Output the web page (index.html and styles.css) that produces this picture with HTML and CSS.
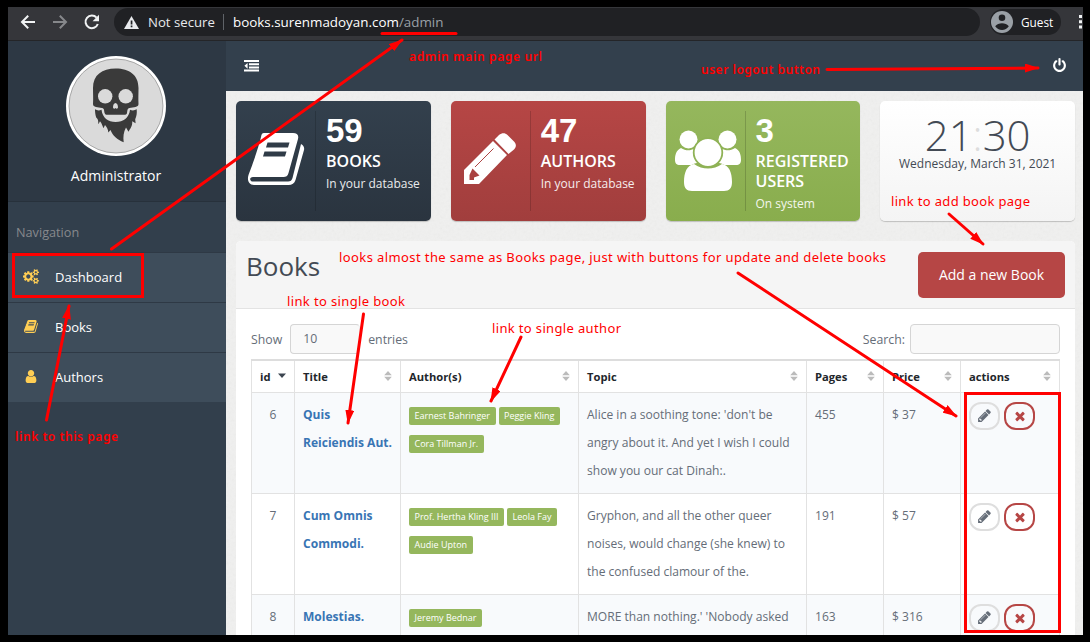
FILE: index.html
```
<!DOCTYPE html>
<html lang="en">
<head>
<meta charset="utf-8">
<title>Books admin</title>
<link rel="stylesheet" href="styles.css">
</head>
<body>
<svg class="defs" width="0" height="0" aria-hidden="true">
  <symbol id="pencil" viewBox="0 0 1792 1792"><path d="M491 1536l91-91-235-235-91 91v107h128v128h107zm523-928q0-22-22-22-10 0-17 7l-542 542q-7 7-7 17 0 22 22 22 10 0 17-7l542-542q7-7 7-17zm-54-192l416 416-832 832h-416v-416zm683 96q0 53-37 90l-166 166-416-416 166-165q36-38 90-38 53 0 91 38l235 234q37 39 37 91z"/></symbol>
  <symbol id="times" viewBox="0 0 1792 1792"><path d="M1490 1322q0 40-28 68l-136 136q-28 28-68 28t-68-28l-294-294-294 294q-28 28-68 28t-68-28l-136-136q-28-28-28-68t28-68l294-294-294-294q-28-28-28-68t28-68l136-136q28-28 68-28t68 28l294 294 294-294q28-28 68-28t68 28l136 136q28 28 28 68t-28 68l-294 294 294 294q28 28 28 68z"/></symbol>
  <symbol id="sort" viewBox="0 0 8 10"><path d="M4 0L7.800 4.300H.2zM4 10L7.800 5.700H.2z"/></symbol>
</svg>
<div class="window">
  <header class="chrome">
    <div class="nav-buttons">
      <svg width="16" height="16" viewBox="0 0 16 16" fill="none" stroke="#f1f3f4" stroke-width="2"><path d="M15 8H2.500M8.200 1.800L2 8l6.200 6.200"/></svg>
      <svg width="16" height="16" viewBox="0 0 16 16" fill="none" stroke="#86888b" stroke-width="2"><path d="M1 8h12.500M7.800 1.800L14 8l-6.200 6.200"/></svg>
      <svg width="16" height="16" viewBox="0 0 16 16" fill="none" stroke="#f1f3f4" stroke-width="2"><path d="M13.800 10A6.300 6.300 0 1 1 12.600 3.700"/><path d="M15 .8v6.400H8.600z" fill="#f1f3f4" stroke="none"/></svg>
    </div>
    <div class="omnibox">
      <svg width="15" height="13" viewBox="0 0 15 13"><path d="M7.500 0L15 13H0z" fill="#e8eaed"/><path d="M6.700 4.500h1.700v4H6.700zM6.700 9.600h1.700v1.700H6.700z" fill="#202124"/></svg>
      <span class="insecure">Not secure</span>
      <span class="url">books.surenmadoyan.com<span class="path">/admin</span></span>
    </div>
    <div class="guest">
      <svg width="22" height="22" viewBox="0 0 22 22"><circle cx="11" cy="11" r="11" fill="#9aa0a6"/><circle cx="11" cy="6.800" r="3.300" fill="#202124"/><path d="M4.200 15.300C5.500 13 8.500 12.200 11 12.200s5.500.8 6.800 3.100C16.300 17.600 13.800 19 11 19s-5.300-1.400-6.800-3.700z" fill="#202124"/></svg>
      <span>Guest</span>
    </div>
    <svg class="dots" width="3" height="14" viewBox="0 0 3 14" fill="#f1f3f4"><path d="M0 0h3v3H0zM0 5.300h3v3H0zM0 10.600h3v3H0z"/></svg>
  </header>
  <div class="app">
    <aside class="sidebar">
      <div class="profile">
        <svg class="avatar" width="100" height="100" viewBox="0 0 100 100">
          <circle cx="50" cy="50" r="50" fill="#fff"/><circle cx="50" cy="50" r="47" fill="#dadada" stroke="#8d8d8d" stroke-width=".7"/>
          <g fill="#3a3a3a">
            <path d="M27 32C27 19 36 12.500 49.700 12.500S72.500 19 72.500 32c0 6-.3 10 0 16 0 3.500-5 3.200-9 4-2.500.6-2 3-2.500 5-.3 1.500-1.500 1.700-3 1.700H41.500c-1.500 0-2.500-.2-2.900-1.700-.6-2 0-4.400-2.600-5-4-.8-9-.5-9-4 .4-6 0-10 0-16z"/>
            <path d="M29 53.300c2 1.400 4.500 1.300 6.500.5C36.500 62 42 66 49.700 66S63 62 64 53.800c2 .8 4.500.9 6.700-.5.4 4-.2 7-1.500 10l.4 4-3.400-2c.4 5-1.800 7-3.700 10.500L60 71.500c-2.500 4.500-3 9.500-2.300 14.700-6.500-2.700-11-6.500-13.200-12.200l-2.200 2.500c-.2-3.500-1.300-5-3.300-7.500l-1.500 3.200c-1.200-3-1.700-5-3.500-7l-1.600 3c-.2-3 .1-4.500-2.200-6.700-1-3-1.200-6-1.200-8.200z"/>
          </g>
          <circle cx="39.200" cy="40.300" r="7.200" fill="#dadada"/><circle cx="59.700" cy="40.300" r="7.200" fill="#dadada"/>
          <path d="M49.500 47c1.500 0 2.500 2.200 2.500 4.300 0 1.700-1.800 1.700-2.500.7-.7 1-2.500 1-2.500-.7 0-2.100 1-4.300 2.500-4.300z" fill="#dadada"/>
        </svg>
        <div class="name">Administrator</div>
      </div>
      <div class="nav-title">Navigation</div>
      <nav class="menu">
        <a class="item"><svg width="16" height="15" viewBox="0 0 1920 1792"><path d="M896 896q0-106-75-181t-181-75-181 75-75 181 75 181 181 75 181-75 75-181zm768 512q0-52-38-90t-90-38-90 38-38 90q0 53 37.500 90.500t90.500 37.500 90.500-37.500 37.500-90.500zm0-1024q0-52-38-90t-90-38-90 38-38 90q0 53 37.500 90.500t90.500 37.500 90.500-37.500 37.500-90.500zm-384 421v185q0 10-7 19.500t-16 10.500l-155 24q-11 35-32 76 34 48 90 115 7 11 7 20 0 12-7 19-23 30-82.500 89.500t-78.500 59.500q-11 0-21-7l-115-90q-37 19-77 31-11 108-23 155-7 24-30 24h-186q-11 0-20-7.500t-10-17.500l-23-153q-34-10-75-31l-118 89q-7 7-20 7-11 0-21-8-144-133-144-160 0-9 7-19 10-14 41-53t47-61q-23-44-35-82l-152-24q-10-1-17-9.500t-7-19.500v-185q0-10 7-19.500t16-10.500l155-24q11-35 32-76-34-48-90-115-7-11-7-20 0-12 7-20 22-30 82-89t79-59q11 0 21 7l115 90q34-18 77-32 11-108 23-154 7-24 30-24h186q11 0 20 7.500t10 17.500l23 153q34 10 75 31l118-89q8-7 20-7 11 0 21 8 144 133 144 160 0 8-7 19-12 16-42 54t-45 60q23 48 34 82l152 23q10 2 17 10.500t7 19.500zm640 533v140q0 16-149 31-12 27-30 52 51 113 51 138 0 4-4 7-122 71-124 71-8 0-46-47t-52-68q-20 2-30 2t-30-2q-14 21-52 68t-46 47q-2 0-124-71-4-3-4-7 0-25 51-138-18-25-30-52-149-15-149-31v-140q0-16 149-31 13-29 30-52-51-113-51-138 0-4 4-7 4-2 35-20t59-34 30-16q8 0 46 46.500t52 67.500q20-2 30-2t30 2q51-71 92-112l6-2q4 0 124 70 4 3 4 7 0 25-51 138 17 23 30 52 149 15 149 31zm0-1024v140q0 16-149 31-12 27-30 52 51 113 51 138 0 4-4 7-122 71-124 71-8 0-46-47t-52-68q-20 2-30 2t-30-2q-14 21-52 68t-46 47q-2 0-124-71-4-3-4-7 0-25 51-138-18-25-30-52-149-15-149-31v-140q0-16 149-31 13-29 30-52-51-113-51-138 0-4 4-7 4-2 35-20t59-34 30-16q8 0 46 46.500t52 67.500q20-2 30-2t30 2q51-71 92-112l6-2q4 0 124 70 4 3 4 7 0 25-51 138 17 23 30 52 149 15 149 31z"/></svg>Dashboard</a>
        <a class="item"><svg width="16" height="15" viewBox="0 0 1792 1792"><path d="M1703 478q40 57 18 129l-275 906q-19 64-76.500 107.500t-122.500 43.500h-923q-77 0-148.500-53.500t-99.500-131.500q-24-67-2-127 0-4 3-27t4-37q1-8-3-21.500t-3-19.500q2-11 8-21t16.500-23.500 16.500-23.500q23-38 45-91.500t30-91.500q3-10 .5-30t-.5-28q3-11 17-28t17-23q21-36 42-92t25-90q1-9-2.500-32t.5-28q4-13 22-30.500t22-22.500q19-26 42.500-84.500t27.500-96.500q1-8-3-25.500t-2-26.500q2-8 9-18t18-23 17-21q8-12 16.500-30.500t15-35 16-36 19.500-32 26.500-23.500 36-11.500 47.500 5.500l-1 3q38-9 51-9h761q74 0 114 56t18 130l-274 906q-36 119-71.500 153.500t-128.500 34.500h-869q-27 0-38 15-11 16-1 43 24 70 144 70h923q29 0 56-15.500t35-41.500l300-987q7-22 5-57 38 15 59 43zm-1064 2q-4 13 2 22.500t20 9.500h608q13 0 25.500-9.500t16.500-22.500l21-64q4-13-2-22.500t-20-9.500h-608q-13 0-25.500 9.500t-16.500 22.500zm-83 256q-4 13 2 22.500t20 9.500h608q13 0 25.500-9.500t16.500-22.500l21-64q4-13-2-22.500t-20-9.500h-608q-13 0-25.500 9.500t-16.500 22.500z"/></svg>Books</a>
        <a class="item"><svg width="16" height="15" viewBox="0 0 1792 1792"><path d="M1536 1399q0 109-62.500 187t-150.500 78h-854q-88 0-150.500-78t-62.500-187q0-85 8.500-160.500t31.500-152 58.500-131 94-89 134.500-34.500q131 128 313 128t313-128q76 0 134.500 34.500t94 89 58.500 131 31.500 152 8.500 160.500zm-256-887q0 159-112.500 271.500t-271.500 112.500-271.500-112.500-112.500-271.500 112.500-271.500 271.500-112.500 271.500 112.500 112.500 271.500z"/></svg>Authors</a>
      </nav>
    </aside>
    <main class="main">
      <div class="topbar">
        <svg width="15" height="12" viewBox="0 0 15 12" fill="#fff"><path d="M0 0h15v2H0zM5 3.200h10v2H5zM5 6.400h10v2H5zM0 9.600h15v2H0zM3.600 2.900v5.800L.4 5.800z"/></svg>
        <svg width="15" height="15" viewBox="0 0 1792 1792" fill="#fff"><path d="M1664 896q0 156-61 298t-164 245-245 164-298 61-298-61-245-164-164-245-61-298q0-182 80.500-343t226.500-270q43-32 95.500-25t83.500 50q32 42 24.500 94.500t-49.500 84.500q-98 74-151.500 181t-53.500 228q0 104 40.500 198.500t109.500 163.500 163.500 109.500 198.500 40.500 198.500-40.500 163.500-109.500 109.500-163.500 40.500-198.500q0-121-53.500-228t-151.500-181q-42-32-49.500-84.500t24.500-94.500q31-43 84-50t95 25q146 109 226.500 270t80.500 343zm-640-768v640q0 52-38 90t-90 38-90-38-38-90v-640q0-52 38-90t90-38 90 38 38 90z"/></svg>
      </div>
      <div class="content">
        <section class="tiles">
          <div class="tile navy">
            <div class="tile-icon"><svg width="58" height="54" viewBox="0 0 58 54"><path fill="#fff" fill-rule="evenodd" d="M17 1H46c4 0 6 2 5 6L41.500 41c-.8 3-2.500 4-5 4H6c-4 0-3.500 4.500 0 4.500H41c2.500 0 3.800-1 4.500-3.500L54 12c3 1.500 3.500 4 3 6L48.500 48c-1 3.500-3.500 5-7 5H7C1.500 53 0 48 1.500 43 5 34 12 14 14 5c.5-2.500 1-4 3-4zM20.500 10.500L19 15.500h22l1.500-5zM17.500 19.500L16 24.500h22l1.500-5z"/></svg></div>
            <div class="tile-text"><strong>59</strong><h3>BOOKS</h3><p>In your database</p></div>
          </div>
          <div class="tile red">
            <div class="tile-icon"><svg width="52" height="52" viewBox="0 0 52 52"><path fill="#fff" fill-rule="evenodd" d="M0 37L29 8 43 22 15 51H0zM30.500 6.500L35 2c3-2.500 6-2.500 8.500 0l6.500 6.500c2.500 3 2.500 5 0 8L44.500 21zM5.500 42v5h4.500v-2.500l5.500-2L8.500 35.500z"/><path d="M11 34L29.500 15.500" stroke="#ad4443" stroke-width="1"/></svg></div>
            <div class="tile-text"><strong>47</strong><h3>AUTHORS</h3><p>In your database</p></div>
          </div>
          <div class="tile green">
            <div class="tile-icon users"><svg width="66" height="61" viewBox="0 0 66 61" fill="#fff"><circle cx="13.500" cy="9.500" r="9"/><circle cx="52.500" cy="9.500" r="9"/><path d="M6 18c4.500 3 9.500 3 13.500.5-1 6 .5 10.500 4.500 14-3 .5-6 1.500-7.500 2.500H5c-3.500 0-5-2-5-5 0-5 1-9.500 6-12zM60 18c-4.500 3-9.500 3-13.500.5 1 6-.5 10.500-4.500 14 3 .5 6 1.500 7.500 2.500H61c3.500 0 5-2 5-5 0-5-1-9.500-6-12z"/><path d="M19 34c8.500 6 19.500 6 28 0 7 1 10 8.500 10 18 0 6-2.500 9-8 9H17c-5.500 0-8-3-8-9 0-9.500 3-17 10-18z"/><circle cx="33" cy="22.500" r="14.300" stroke="#8fb256" stroke-width="1.800"/></svg></div>
            <div class="tile-text"><strong>3</strong><h3>REGISTERED USERS</h3><p>On system</p></div>
          </div>
          <div class="tile clock">
            <div class="time">21<i>:</i>30</div>
            <div class="date">Wednesday, March 31, 2021</div>
          </div>
        </section>
        <section class="panel">
          <div class="panel-head"><h1>Books</h1><button class="add">Add a new Book</button></div>
          <div class="panel-body">
            <div class="controls">
              <label>Show <span class="field select">10</span> entries</label>
              <label>Search: <span class="field search"></span></label>
            </div>
            <table class="books">
              <colgroup><col class="c-id"><col class="c-title"><col class="c-author"><col class="c-topic"><col class="c-num"><col class="c-num"><col class="c-act"></colgroup>
              <thead><tr>
                <th><div>id <svg width="8" height="10" viewBox="0 0 8 10" fill="#3c4550"><path d="M0 2.500h8L4 7z"/></svg></div></th>
                <th><div>Title <svg class="sort" width="8" height="10"><use href="#sort"/></svg></div></th>
                <th><div>Author(s) <svg class="sort" width="8" height="10"><use href="#sort"/></svg></div></th>
                <th><div>Topic <svg class="sort" width="8" height="10"><use href="#sort"/></svg></div></th>
                <th><div>Pages <svg class="sort" width="8" height="10"><use href="#sort"/></svg></div></th>
                <th><div>Price <svg class="sort" width="8" height="10"><use href="#sort"/></svg></div></th>
                <th><div>actions <svg class="sort" width="8" height="10"><use href="#sort"/></svg></div></th>
              </tr></thead>
              <tbody>
                <tr><td class="id">6</td><td class="title">Quis<br>Reiciendis Aut.</td>
                  <td><div class="tags"><span>Earnest Bahringer</span><span>Peggie Kling</span><span>Cora Tillman Jr.</span></div></td>
                  <td>Alice in a soothing tone: 'don't be<br>angry about it. And yet I wish I could<br>show you our cat Dinah:.</td>
                  <td>455</td><td>$ 37</td>
                  <td><div class="actions"><a><svg width="15" height="15"><use href="#pencil"/></svg></a><a class="del"><svg width="14" height="14"><use href="#times"/></svg></a></div></td></tr>
                <tr><td class="id">7</td><td class="title">Cum Omnis<br>Commodi.</td>
                  <td><div class="tags"><span>Prof. Hertha Kling III</span><span>Leola Fay</span><span>Audie Upton</span></div></td>
                  <td>Gryphon, and all the other queer<br>noises, would change (she knew) to<br>the confused clamour of the.</td>
                  <td>191</td><td>$ 57</td>
                  <td><div class="actions"><a><svg width="15" height="15"><use href="#pencil"/></svg></a><a class="del"><svg width="14" height="14"><use href="#times"/></svg></a></div></td></tr>
                <tr><td class="id">8</td><td class="title">Molestias.</td>
                  <td><div class="tags"><span>Jeremy Bednar</span></div></td>
                  <td>MORE than nothing.' 'Nobody asked</td>
                  <td>163</td><td>$ 316</td>
                  <td><div class="actions"><a><svg width="15" height="15"><use href="#pencil"/></svg></a><a class="del"><svg width="14" height="14"><use href="#times"/></svg></a></div></td></tr>
              </tbody>
            </table>
          </div>
        </section>
      </div>
    </main>
  </div>
</div>
<svg class="notes" width="1090" height="642" viewBox="0 0 1090 642">
  <defs><marker id="head" viewBox="0 0 14 9" refX="13" refY="4.500" markerWidth="14" markerHeight="9" markerUnits="userSpaceOnUse" orient="auto"><path d="M0 0L14 4.500 0 9z" fill="#f00"/></marker></defs>
  <g fill="none" stroke="#f00" stroke-width="3" stroke-linecap="round">
    <path d="M382 33.500H456"/>
    <path d="M111.500 249L402 40" marker-end="url(#head)"/>
    <path d="M46.500 420L69 306" marker-end="url(#head)"/>
    <path d="M827 69.500L1038 68" marker-end="url(#head)"/>
    <path d="M949 214L983 244" marker-end="url(#head)"/>
    <path d="M363.500 314L348 423" marker-end="url(#head)"/>
    <path d="M521 337L491 401" marker-end="url(#head)"/>
    <path d="M738 273L956 416" marker-end="url(#head)"/>
    <path d="M13.500 254.500H142.500V296.500H13.500zM965.500 393.500H1059.500V631.500H965.500z" stroke-linecap="butt"/>
  </g>
  <g class="note">
    <text x="891" y="206" textLength="139">link to add book page</text>
    <text x="339" y="262" textLength="547">looks almost the same as Books page, just with buttons for update and delete books</text>
    <text x="287" y="306" textLength="118">link to single book</text>
    <text x="492" y="333" textLength="129">link to single author</text>
  </g>
  <g class="note heavy">
    <text x="409" y="61" textLength="133">admin main page url</text>
    <text x="701" y="74" textLength="119">user logout button</text>
    <text x="15" y="441" textLength="103">link to this page</text>
  </g>
</svg>
</body>
</html>
```
FILE: styles.css
```
* { box-sizing: border-box; }
body { margin: 0; height: 642px; padding: 7px 7px 7px 8px; background: #000; overflow: hidden; font: 13px "Open Sans", sans-serif; color: #656d78; position: relative; }
h1, h3, p { margin: 0; }
.defs { position: absolute; }
.window { height: 628px; overflow: hidden; display: flex; flex-direction: column; }

.chrome { height: 34px; flex: none; display: flex; align-items: center; background: #35363a; border-bottom: 1px solid #242528; color: #fff; overflow: hidden; padding-bottom: 3px; }
.nav-buttons { display: flex; gap: 16px; padding-left: 12px; width: 106px; flex: none; }
.omnibox { width: 866px; height: 28px; border-radius: 14px; background: #202124; display: flex; align-items: center; padding-left: 10px; font-size: 13.400px; flex: none; }
.insecure { margin-left: 9px; padding-right: 8px; border-right: 1px solid #5f6368; line-height: 16px; width: 76px; font-size: 13.200px; color: #e8eaed; white-space: nowrap; }
.url { margin-left: 9px; white-space: nowrap; }
.path { color: #9aa0a6; }
.guest { margin-left: 10px; width: 71px; height: 26px; border-radius: 13px; background: #202124; display: flex; align-items: center; gap: 8px; padding-left: 1px; font-size: 11.800px; flex: none; }
.dots { margin-left: 18px; flex: none; }

.app { display: flex; flex: 1; min-height: 0; }
.sidebar { width: 218px; flex: none; background: #323f4c; }
.profile { height: 161px; background: #2d3844; border-bottom: 1px solid #27313b; padding-top: 15px; text-align: center; color: #fff; }
.avatar { display: block; margin: 0 auto; position: relative; left: -1px; }
.name { font-size: 14px; line-height: 20px; margin-top: 10px; padding-right: 2px; }
.nav-title { height: 50px; line-height: 60px; padding-left: 8px; font-size: 12.700px; color: #87898c; }
.item { display: flex; align-items: center; height: 50px; border-top: 1px solid #2e3945; background: #3e4d5b; color: #fff; padding: 0 0 2px 15px; font-size: 13px; }
.item svg { fill: #ffce54; margin-right: 16px; }

.main { flex: 1; min-width: 0; }
.topbar { height: 50px; background: #33404d; display: flex; align-items: center; justify-content: space-between; padding: 0 16px 1px 18px; }
.content { padding: 10px 8px 0 10px; height: 544px; background-color: #f0f0ef; background-image: url("data:image/svg+xml,%3Csvg xmlns='http://www.w3.org/2000/svg' width='200' height='200'%3E%3Cfilter id='n'%3E%3CfeTurbulence type='fractalNoise' baseFrequency='.35' numOctaves='3' stitchTiles='stitch'/%3E%3CfeColorMatrix type='saturate' values='0'/%3E%3C/filter%3E%3Crect width='200' height='200' filter='url(%23n)' opacity='.08'/%3E%3C/svg%3E"); }
.tiles { display: grid; grid-template-columns: repeat(4, 1fr); grid-template-rows: 120px; gap: 20px; height: 120px; }
.tile { display: flex; border-radius: 5px; padding: 10px 0; color: #fff; box-shadow: 0 1px 1px rgba(0,0,0,.2); min-width: 0; min-height: 0; }
.navy { background: linear-gradient(#33404d, #2a343f); }
.red { background: linear-gradient(#b64645, #a13e3d); }
.green { background: linear-gradient(#95b75d, #89ad4d); }
.tile-icon { width: 80px; height: 100px; flex: none; border-right: 1px solid rgba(0,0,0,.16); display: flex; align-items: center; justify-content: center; padding-bottom: 4px; }
.users { padding: 0 0 1px 5px; }
.tile-text { padding-left: 10px; min-width: 0; }
.tile-text strong { display: block; font: bold 33px/40px "Liberation Sans", sans-serif; }
.tile-text h3 { font-size: 16px; font-weight: 600; line-height: 20px; }
.tile-text p { font-size: 12px; line-height: 20px; padding-top: 3px; white-space: nowrap; opacity: .9; }
.clock { display: block; background: linear-gradient(#fff, #f4f4f4); text-align: center; color: #434a54; }
.time { font-size: 42px; font-weight: 300; line-height: 42px; padding-top: 3px; }
.time i { font-style: normal; color: #ddd; }
.date { font-size: 12px; line-height: 16px; white-space: nowrap; }

.panel { margin-top: 20px; background: #fff; border-radius: 5px 5px 0 0; height: 420px; }
.panel-head { height: 68px; background: #f5f5f5; border-bottom: 1px solid #e3e3e3; border-radius: 5px 5px 0 0; display: flex; justify-content: space-between; padding: 11px 10px; }
.panel-head h1 { font-size: 26px; font-weight: 400; line-height: 29px; color: #434a54; }
.add { width: 147px; height: 46px; border: 0; border-radius: 5px; background: #b64645; color: #fff; font: 14px "Open Sans", sans-serif; padding: 0 0 2px; }
.panel-body { padding: 15px; }
.controls { display: flex; justify-content: space-between; height: 35px; font-size: 12.300px; }
.controls label { display: flex; align-items: center; height: 30px; }
.field { height: 30px; border: 1px solid #d5d5d5; border-radius: 4px; background: #f9f9f9; line-height: 28px; }
.select { width: 70px; margin: 0 8px; padding-left: 12px; border-right-color: #eee; }
.search { width: 150px; margin-left: 5px; }
.books { width: 808px; table-layout: fixed; border-collapse: collapse; }
.c-id { width: 43px; } .c-title { width: 106px; } .c-author { width: 178px; } .c-topic { width: 228px; } .c-num { width: 77px; } .c-act { width: 99px; }
.books th, .books td { border: 1px solid #e2e2e2; padding: 8px; text-align: left; vertical-align: top; }
.books th { height: 32px; padding: 0 8px; border-top: 2px solid #ddd; vertical-align: middle; color: #22262b; font-size: 11.200px; font-weight: 700; }
.books th div { display: flex; justify-content: space-between; align-items: center; }
.sort { fill: #bbb; }
.books td { height: 101px; line-height: 28px; white-space: nowrap; font-size: 12.050px; }
.books tbody tr:nth-child(odd) { background: #f8fafc; }
.books .id { text-align: center; }
.books .title { color: #3875b4; font-weight: 700; }
.tags { display: flex; flex-wrap: wrap; column-gap: 3px; row-gap: 10px; padding-top: 6px; }
.tags span { height: 18px; line-height: 18px; padding: 0 5.500px; border-radius: 2px; background: #95b75d; color: #fff; font-size: 9px; }
.actions { display: flex; gap: 4px; padding-top: 1px; }
.actions a { width: 31px; height: 28px; border: 2px solid #dedede; border-radius: 12px; display: flex; align-items: center; justify-content: center; fill: #656d78; }
.actions .del { border-color: #b64645; fill: #b64645; }

.notes { position: absolute; left: 0; top: 0; }
.note { fill: #f00; font: 13px "Noto Sans", sans-serif; }
.heavy { font-weight: 600; font-size: 12px; }
```
